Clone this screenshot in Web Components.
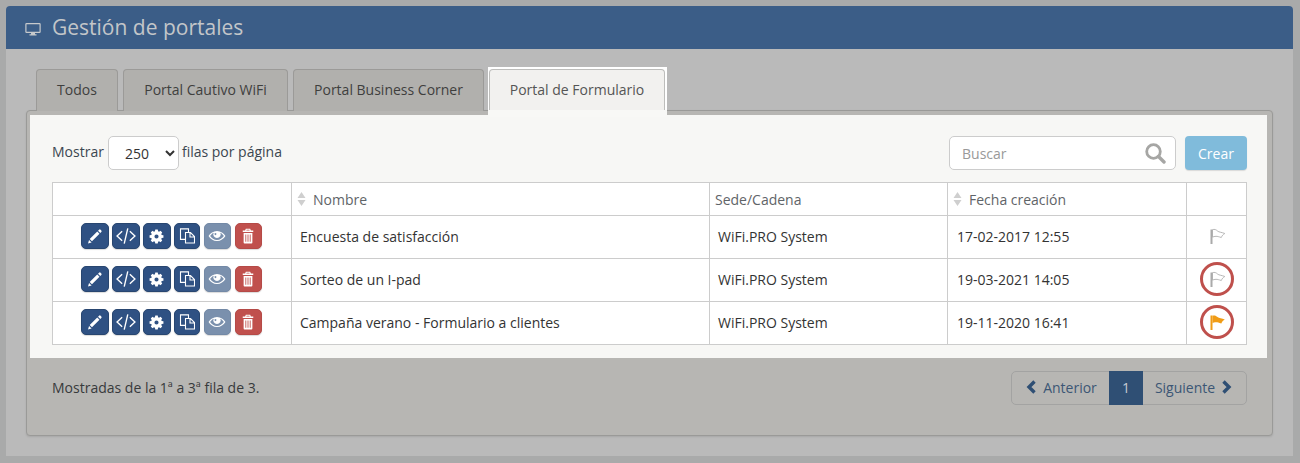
<!DOCTYPE html>
<html lang="es">
<head>
<meta charset="utf-8">
<title>Gestión de portales</title>
<style>
  html, body { margin: 0; height: 100%; }
  body {
    background: #a9aaaa;
    font: 14px "Open Sans", "Liberation Sans", sans-serif;
    color: #333;
    padding: 6px 7px 6px 6px;
    box-sizing: border-box;
    overflow: hidden;
  }
</style>
</head>
<body>
<portal-panel title-text="Gestión de portales">
  <portal-tabs></portal-tabs>
  <portal-card>
    <table-toolbar></table-toolbar>
    <portal-table></portal-table>
    <table-footer slot="footer"></table-footer>
  </portal-card>
</portal-panel>

<script>
const ICONS = {
  pencil: { w: 18, h: 18, d: '<path fill="#fff" d="M3.300 10.700 10 4l2 2-6.700 6.700zM2.700 11.500 5 13.800 1.800 14.700zM10.700 3.300l.9-.9a1 1 0 0 1 1.400 0l.6.6a1 1 0 0 1 0 1.400l-.9.9z"/>' },
  code: { w: 22, h: 22, d: '<path fill="none" stroke="#fff" stroke-width="1" d="M5.200 4.500 1.500 8l3.700 3.500M10.800 4.500 14.500 8l-3.700 3.500M9.300 2.500 6.700 13.500"/>' },
  cog: { w: 15, h: 15, d: '<path fill="#fff" fill-rule="evenodd" d="M6.700 .6h2.600l.4 1.900 1 .4 1.600-1 1.800 1.800-1 1.600.4 1 1.900.4v2.600l-1.900.4-.4 1 1 1.600-1.800 1.800-1.600-1-1 .4-.4 1.900H6.700l-.4-1.900-1-.4-1.600 1-1.800-1.800 1-1.600-.4-1-1.900-.4V6.700l1.900-.4.4-1-1-1.600 1.800-1.800 1.600 1 1-.4zM8 5.800a2.200 2.200 0 1 0 0 4.400 2.200 2.200 0 0 0 0-4.400z"/>' },
  copy: { w: 16, h: 16, d: '<path fill="none" stroke="#fff" stroke-width="1.100" d="M9.500 4.500V.9H1.500v10.500H6.500M6.500 4.500h5l4 4v6.500h-9zM11 4.500V9h4.500"/>' },
  eye: { w: 18, h: 18, d: '<path fill="#fff" fill-rule="evenodd" d="M8 3.500c3.300 0 6 2 7.500 4.500C14 10.500 11.300 12.500 8 12.500S2 10.500.5 8C2 5.500 4.700 3.500 8 3.500zM5.100 5C3.700 5.600 2.700 6.700 1.900 8c1.300 2 3.500 3.500 6.100 3.500S12.800 10 14.100 8c-.8-1.300-1.800-2.400-3.200-3a3.300 3.300 0 1 1-5.800 0zM6 5.600a.9.900 0 1 0 1.400 1.100A.9.900 0 0 0 6 5.600z"/>' },
  trash: { w: 14, h: 18, d: '<path fill="#fff" fill-rule="evenodd" d="M5.500 1.500h5l.8 1.700H14v1.300H2V3.200h2.700zM6.400 2.500l-.3.700h3.800l-.3-.7zM3 5.300h10v8.400a1 1 0 0 1-1 1H4a1 1 0 0 1-1-1zM5 6.700v6.300h1V6.700zM7.500 6.700v6.300h1V6.700zM10 6.700v6.300h1V6.700z"/>' }
};

class PortalPanel extends HTMLElement {
  constructor() {
    super();
    this.attachShadow({ mode: 'open' });
  }
  connectedCallback() {
    this.shadowRoot.innerHTML = `
      <style>
        :host { display: block; background: #bababa; height: 450px; border-radius: 4px 4px 0 0; }
        header {
          height: 43px; background: #3b5d87; color: #c3c6c9; border-radius: 4px 4px 0 0;
          display: flex; align-items: center; padding-left: 19px; gap: 11px;
          font-size: 21px; line-height: 43px;
        }
        svg { width: 16px; height: 14px; margin-top: 3px; }
        .body { padding: 20px 20px 0 20px; }
      </style>
      <header>
        <svg viewBox="0 0 16 14"><path fill="#c6c9cc" fill-rule="evenodd" d="M1.500 1h13a1.200 1.200 0 0 1 1.200 1.200v7.600a1.200 1.200 0 0 1-1.200 1.200H10v1.300h1.500V13.500h-7v-1.200H6V11H1.500A1.200 1.200 0 0 1 .3 9.800V2.200A1.200 1.200 0 0 1 1.500 1zM1.500 2.300v7.400h13V2.300z"/></svg>
        <span>${this.getAttribute('title-text')}</span>
      </header>
      <div class="body"><slot></slot></div>`;
  }
}

class PortalTabs extends HTMLElement {
  constructor() {
    super();
    this.attachShadow({ mode: 'open' });
  }
  connectedCallback() {
    const tabs = [['Todos', 82], ['Portal Cautivo WiFi', 165], ['Portal Business Corner', 191], ['Portal de Formulario', 176]];
    this.shadowRoot.innerHTML = `
      <style>
        :host { display: flex; gap: 5px; padding-left: 10px; height: 41px; position: relative; z-index: 1; }
        .tab {
          box-sizing: border-box; height: 42px; line-height: 40px; text-align: center;
          background: #b1b0ad; color: #3f3f3e; border: 1px solid #9b9a98; border-bottom: 0;
          border-radius: 4px 4px 0 0;
        }
        .tab.active {
          background: #f2f1ef; color: #555; height: 41px; border-color: #bdbdbb;
          position: relative;
        }
        /* the white square the highlight leaves round the tab */
        .tab.active::before {
          content: ""; position: absolute; left: -2px; right: -3px; top: -3px; bottom: 0; background: #fff; z-index: -1;
        }
        .tab.active::after {
          content: ""; position: absolute; left: -2px; right: -3px; top: 40px; height: 7px; background: #f8f8f6;
        }
      </style>
      ${tabs.map(([t, w], i) => `<div class="tab ${i === 3 ? 'active' : ''}" style="width:${w}px">${t}</div>`).join('')}`;
  }
}

class PortalCard extends HTMLElement {
  constructor() {
    super();
    this.attachShadow({ mode: 'open' });
  }
  connectedCallback() {
    this.shadowRoot.innerHTML = `
      <style>
        :host {
          display: block; box-sizing: border-box; height: 326px; background: #b7b6b3;
          border: 1px solid #9a9a98; border-radius: 4px; padding: 4px 5px 0 3px;
          box-shadow: 0 1px 2px rgba(0,0,0,.1);
        }
        .lit { background: #f7f7f5; height: 243px; box-sizing: border-box; padding: 21px 20px 0 22px; }
      </style>
      <div class="lit"><slot></slot></div>
      <slot name="footer"></slot>`;
  }
}

class TableToolbar extends HTMLElement {
  constructor() {
    super();
    this.attachShadow({ mode: 'open' });
  }
  connectedCallback() {
    this.shadowRoot.innerHTML = `
      <style>
        :host { display: flex; justify-content: space-between; align-items: flex-start; height: 46px; font-size: 14px; color: #3b4650; }
        .len { display: flex; align-items: center; gap: 4px; height: 30px; }
        select {
          width: 71px; height: 34px; font: 14px "Open Sans", sans-serif; color: #333; background: #fff;
          border: 1px solid #ccc; border-radius: 5px; padding-left: 12px; margin: 4px -1px 0 0;
        }
        .right { display: flex; gap: 9px; }
        .search {
          box-sizing: border-box; width: 227px; height: 34px; background: #fff; border: 1px solid #ccc; border-radius: 5px;
          display: flex; align-items: center; justify-content: space-between; padding: 0 9px 0 12px; color: #999;
        }
        .search svg { width: 22px; height: 22px; }
        .crear {
          box-sizing: border-box; width: 62px; height: 34px; background: #80bbdb; border-radius: 4px; color: #fff;
          display: flex; align-items: center; justify-content: center; box-shadow: 0 1px 1px rgba(0,0,0,.12);
        }
      </style>
      <div class="len">Mostrar <select><option>250</option></select> filas por página</div>
      <div class="right">
        <div class="search"><span>Buscar</span>
          <svg viewBox="0 0 22 22"><circle cx="9.500" cy="9.500" r="6.800" fill="none" stroke="#a6a6a4" stroke-width="2.800"/><path d="M14.500 14.500 20 20" stroke="#a6a6a4" stroke-width="3.400" stroke-linecap="round"/></svg>
        </div>
        <div class="crear">Crear</div>
      </div>`;
  }
}

class ActionButton extends HTMLElement {
  constructor() {
    super();
    this.attachShadow({ mode: 'open' });
  }
  connectedCallback() {
    const w = this.getAttribute('w') || 28;
    const icon = ICONS[this.getAttribute('icon')];
    this.shadowRoot.innerHTML = `
      <style>
        :host {
          display: flex; align-items: center; justify-content: center; box-sizing: border-box;
          width: ${w}px; height: 26px; border-radius: 5px; background: var(--bg, #2f5183);
          border: 1px solid var(--bd, #284670); box-shadow: 0 1px 1px rgba(0,0,0,.15);
        }
        svg { width: ${icon.w}px; height: ${icon.h}px; flex: none; }
      </style>
      <svg viewBox="0 0 16 16" preserveAspectRatio="none">${icon.d}</svg>`;
  }
}

class StatusFlag extends HTMLElement {
  constructor() {
    super();
    this.attachShadow({ mode: 'open' });
  }
  connectedCallback() {
    const on = this.hasAttribute('on');
    const ring = this.hasAttribute('ring');
    const c = on ? '#f09c16' : '#b5b5b5';
    const shape = 'M3.500 1.700C5.500 1 7 1.500 8.500 3c1.500 1.300 4.500 1.300 7.300 2.500-1.500.8-2.800 2-3.500 4-2.500-.8-3.800-1.200-5.300-1.200s-2.500.4-3.500.8z';
    this.shadowRoot.innerHTML = `
      <style>
        :host {
          display: flex; align-items: center; justify-content: center; box-sizing: border-box;
          width: 34px; height: 34px; border-radius: 50%; margin: 0 auto;
          ${ring ? 'border: 3px solid #bf504c;' : ''}
        }
        svg { width: 16px; height: 16px; display: block; flex: none; }
      </style>
      <svg viewBox="0 0 16 16">
        <path d="${shape}" ${on ? `fill="${c}"` : `fill="#fff" stroke="#b8b8b8"`}/>
        <rect x="1.500" y="1.500" width="2" height="14.500" fill="${on ? c : '#aaa'}"/>
      </svg>`;
  }
}

class PortalTable extends HTMLElement {
  constructor() {
    super();
    this.attachShadow({ mode: 'open' });
  }
  connectedCallback() {
    const rows = [
      ['Encuesta de satisfacción', '17-02-2017 12:55', ''],
      ['Sorteo de un I-pad', '19-03-2021 14:05', 'ring'],
      ['Campaña verano - Formulario a clientes', '19-11-2020 16:41', 'ring on']
    ];
    const sort = '<svg class="sort" viewBox="0 0 9 14"><path fill="#cfcfcf" d="M4.500 0 8.500 6h-8zM4.500 14 .5 8h8z"/></svg>';
    const actions = `
      <action-button icon="pencil"></action-button>
      <action-button icon="code"></action-button>
      <action-button icon="cog"></action-button>
      <action-button icon="copy" w="26"></action-button>
      <action-button icon="eye" w="27" style="--bg:#7a90ad;--bd:#7389a6;margin-left:1px"></action-button>
      <action-button icon="trash" w="27" style="--bg:#c0504d;--bd:#b54a47;margin-left:1px"></action-button>`;
    this.shadowRoot.innerHTML = `
      <style>
        :host { display: block; }
        table { border-collapse: collapse; table-layout: fixed; width: 1194px; background: #fff; color: #333; }
        th, td { border: 1px solid #ccc; padding: 0; }
        th { height: 32px; font-weight: 400; text-align: left; color: #5f6468; }
        td { height: 40px; padding: 0 0 2px 8px; }
        th .h { display: flex; align-items: center; gap: 7px; padding-left: 5px; }
        th .plain { padding-left: 5px; }
        .sort { width: 9px; height: 14px; }
        .btns { display: flex; gap: 3px; justify-content: center; padding-right: 10px; }
        td.flag { padding-left: 0; }
        td.date { padding-left: 9px; }
      </style>
      <table>
        <colgroup><col style="width:239px"><col style="width:418px"><col style="width:238px"><col style="width:239px"><col style="width:60px"></colgroup>
        <tr>
          <th></th>
          <th><div class="h">${sort}Nombre</div></th>
          <th><div class="plain">Sede/Cadena</div></th>
          <th><div class="h">${sort}Fecha creación</div></th>
          <th></th>
        </tr>
        ${rows.map(([name, date, flag]) => `<tr>
          <td><div class="btns">${actions}</div></td>
          <td>${name}</td>
          <td>WiFi.PRO System</td>
          <td class="date">${date}</td>
          <td class="flag"><status-flag ${flag}></status-flag></td>
        </tr>`).join('')}
      </table>`;
  }
}

class TableFooter extends HTMLElement {
  constructor() {
    super();
    this.attachShadow({ mode: 'open' });
  }
  connectedCallback() {
    this.shadowRoot.innerHTML = `
      <style>
        :host { display: flex; justify-content: space-between; align-items: flex-start; padding: 13px 20px 0 22px; color: #373a3c; }
        .msg { line-height: 34px; }
        .pager {
          display: flex; height: 34px; box-sizing: border-box; border: 1px solid #a3a3a2; border-radius: 5px;
          color: #3c5675; width: 236px; align-items: center;
        }
        .pager div { display: flex; align-items: center; gap: 5px; padding-bottom: 2px; box-sizing: border-box; }
        .prev { width: 97px; justify-content: center; padding-left: 2px; }
        .cur { width: 34px; height: 34px; background: #2f4f74; color: #c6ccd3; justify-content: center; }
        .next { flex: 1; justify-content: center; padding-right: 2px; }
        svg { width: 12px; height: 14px; }
      </style>
      <span class="msg">Mostradas de la 1ª a 3ª fila de 3.</span>
      <div class="pager">
        <div class="prev"><svg viewBox="0 0 12 14"><path d="M8.500 1.500 3 7l5.500 5.500" fill="none" stroke="#2f4f74" stroke-width="3.400"/></svg>Anterior</div>
        <div class="cur">1</div>
        <div class="next">Siguiente<svg viewBox="0 0 12 14"><path d="M3.500 1.500 9 7l-5.500 5.500" fill="none" stroke="#2f4f74" stroke-width="3.400"/></svg></div>
      </div>`;
  }
}

customElements.define('portal-panel', PortalPanel);
customElements.define('portal-tabs', PortalTabs);
customElements.define('portal-card', PortalCard);
customElements.define('table-toolbar', TableToolbar);
customElements.define('action-button', ActionButton);
customElements.define('status-flag', StatusFlag);
customElements.define('portal-table', PortalTable);
customElements.define('table-footer', TableFooter);
</script>
</body>
</html>
